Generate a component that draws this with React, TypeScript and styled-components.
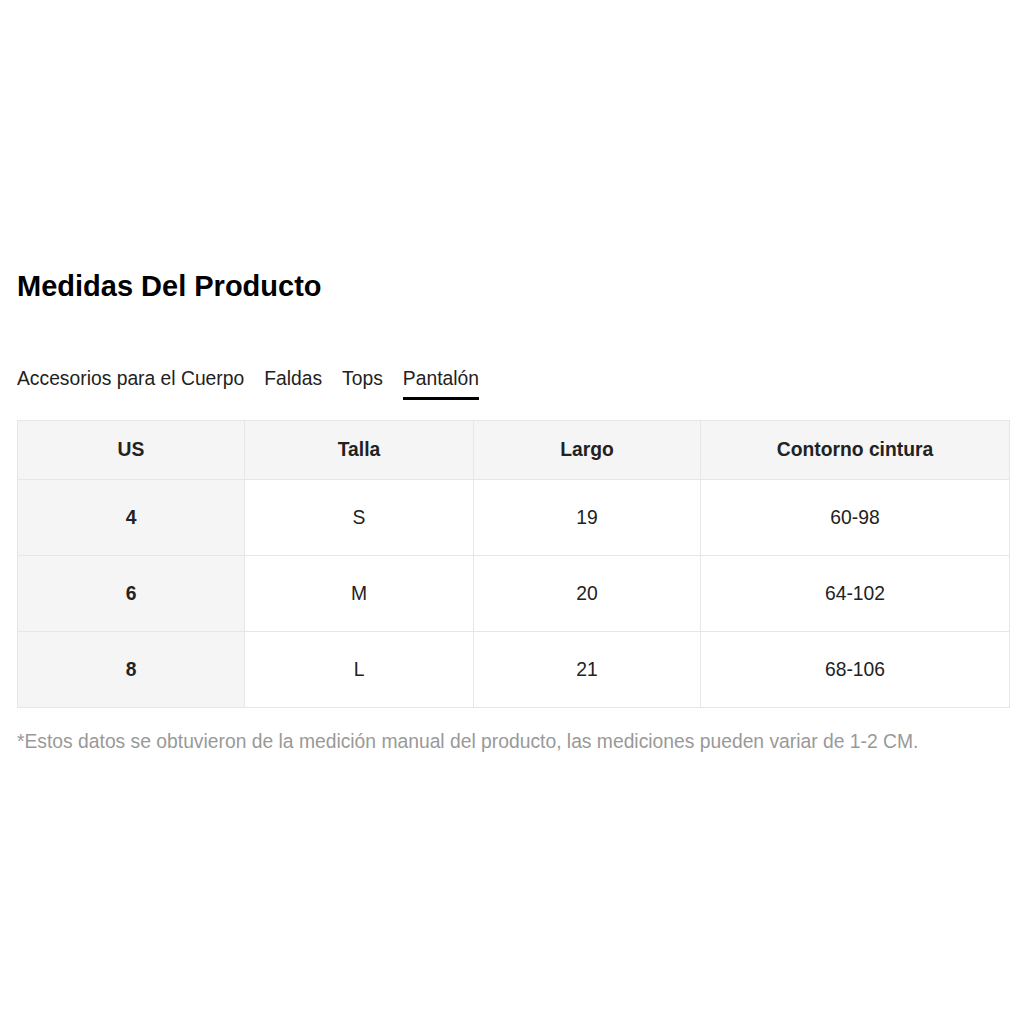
import React, { useState } from 'react';
import styled, { createGlobalStyle } from 'styled-components';

const GlobalStyle = createGlobalStyle`
  html, body {
    margin: 0;
    padding: 0;
    background: #fff;
    font-family: 'Liberation Sans', Arial, sans-serif;
    color: #222;
  }
`;

const Page = styled.main`
  box-sizing: border-box;
  width: 1024px;
  height: 1024px;
  padding: 268px 15px 0 17px;
`;

const Title = styled.h2`
  margin: 0;
  font-size: 29px;
  line-height: 36px;
  font-weight: 700;
  color: #000;
`;

const Tabs = styled.div`
  display: flex;
  gap: 20px;
  margin-top: 63px;
`;

const Tab = styled.div<{ active: boolean }>`
  font-size: 19.3px;
  line-height: 24px;
  padding-bottom: 6px;
  color: #222;
  border-bottom: 3px solid ${(props) => (props.active ? '#000' : 'transparent')};
  cursor: pointer;
`;

const Table = styled.table`
  margin-top: 20px;
  width: 992px;
  border-collapse: collapse;
  table-layout: fixed;
  font-size: 19.3px;
`;

const Th = styled.th`
  height: 58px;
  padding: 0;
  background: #f5f5f5;
  border: 1px solid #e6e6e6;
  font-weight: 700;
  color: #222;
  text-align: center;
`;

const Td = styled.td<{ head?: boolean }>`
  height: 75px;
  padding: 0;
  border: 1px solid #e6e6e6;
  text-align: center;
  color: #222;
  background: ${(props) => (props.head ? '#f5f5f5' : '#fff')};
  font-weight: ${(props) => (props.head ? 700 : 400)};
`;

const Note = styled.p`
  margin: 23px 0 0;
  font-size: 19.3px;
  color: #999;
`;

const TABS = ['Accesorios para el Cuerpo', 'Faldas', 'Tops', 'Pantalón'];
const HEAD = ['US', 'Talla', 'Largo', 'Contorno cintura'];
const ROWS = [
  ['4', 'S', '19', '60-98'],
  ['6', 'M', '20', '64-102'],
  ['8', 'L', '21', '68-106'],
];
const WIDTHS = [227, 229, 227, 309];

const App = () => {
  const [tab, setTab] = useState<number>(3);

  return (
    <Page>
      <GlobalStyle />
      <Title>Medidas Del Producto</Title>
      <Tabs>
        {TABS.map((t, i) => (
          <Tab key={t} active={tab === i} onClick={() => setTab(i)}>
            {t}
          </Tab>
        ))}
      </Tabs>
      <Table>
        <colgroup>
          {WIDTHS.map((w, i) => (
            <col key={i} style={{ width: w }} />
          ))}
        </colgroup>
        <thead>
          <tr>
            {HEAD.map((h) => (
              <Th key={h}>{h}</Th>
            ))}
          </tr>
        </thead>
        <tbody>
          {ROWS.map((row) => (
            <tr key={row[0]}>
              {row.map((cell, i) => (
                <Td key={i} head={i === 0}>
                  {cell}
                </Td>
              ))}
            </tr>
          ))}
        </tbody>
      </Table>
      <Note>
        *Estos datos se obtuvieron de la medición manual del producto, las mediciones pueden variar de
        1-2 CM.
      </Note>
    </Page>
  );
};

export default App;
